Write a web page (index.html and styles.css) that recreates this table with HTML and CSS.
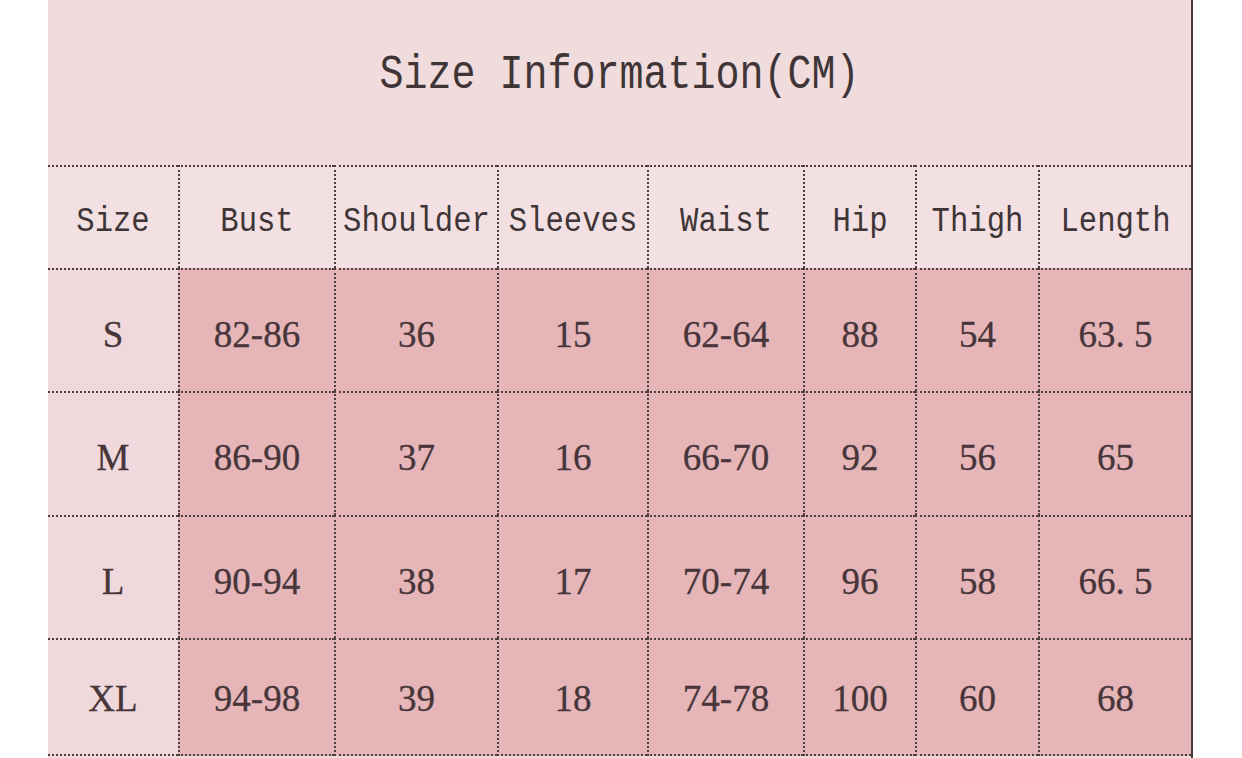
FILE: index.html
```html
<!DOCTYPE html>
<html lang="en">
<head>
<meta charset="utf-8">
<title>Size Information</title>
<link rel="stylesheet" href="styles.css">
</head>
<body>
<div class="sheet">
  <div class="title"><span class="title-text">Size Information(CM)</span></div>
  <div class="grid">
    <div class="cell head first"><span class="mono">Size</span></div>
    <div class="cell head"><span class="mono">Bust</span></div>
    <div class="cell head"><span class="mono">Shoulder</span></div>
    <div class="cell head"><span class="mono">Sleeves</span></div>
    <div class="cell head"><span class="mono">Waist</span></div>
    <div class="cell head"><span class="mono">Hip</span></div>
    <div class="cell head"><span class="mono">Thigh</span></div>
    <div class="cell head"><span class="mono">Length</span></div>

    <div class="cell size first"><span class="num">S</span></div>
    <div class="cell data"><span class="num">82-86</span></div>
    <div class="cell data"><span class="num">36</span></div>
    <div class="cell data"><span class="num">15</span></div>
    <div class="cell data"><span class="num">62-64</span></div>
    <div class="cell data"><span class="num">88</span></div>
    <div class="cell data"><span class="num">54</span></div>
    <div class="cell data"><span class="num">63. 5</span></div>

    <div class="cell size first"><span class="num">M</span></div>
    <div class="cell data"><span class="num">86-90</span></div>
    <div class="cell data"><span class="num">37</span></div>
    <div class="cell data"><span class="num">16</span></div>
    <div class="cell data"><span class="num">66-70</span></div>
    <div class="cell data"><span class="num">92</span></div>
    <div class="cell data"><span class="num">56</span></div>
    <div class="cell data"><span class="num">65</span></div>

    <div class="cell size first"><span class="num">L</span></div>
    <div class="cell data"><span class="num">90-94</span></div>
    <div class="cell data"><span class="num">38</span></div>
    <div class="cell data"><span class="num">17</span></div>
    <div class="cell data"><span class="num">70-74</span></div>
    <div class="cell data"><span class="num">96</span></div>
    <div class="cell data"><span class="num">58</span></div>
    <div class="cell data"><span class="num">66. 5</span></div>

    <div class="cell size first last"><span class="num">XL</span></div>
    <div class="cell data last"><span class="num">94-98</span></div>
    <div class="cell data last"><span class="num">39</span></div>
    <div class="cell data last"><span class="num">18</span></div>
    <div class="cell data last"><span class="num">74-78</span></div>
    <div class="cell data last"><span class="num">100</span></div>
    <div class="cell data last"><span class="num">60</span></div>
    <div class="cell data last"><span class="num">68</span></div>
  </div>
</div>
</body>
</html>
```

FILE: styles.css
```css
html, body {
  margin: 0;
  padding: 0;
  background: #ffffff;
  height: 758px;
  overflow: hidden;
}

.sheet {
  margin-left: 48px;
  width: 1143px;
  height: 758px;
  background: #f0dbdd;
  border-right: 2px solid #4a3a3c;
  display: flex;
  flex-direction: column;
}

.title {
  height: 165px;
  display: flex;
  justify-content: center;
  align-items: flex-start;
  padding-top: 52px;
  box-sizing: border-box;
}

.title-text {
  font-family: "Liberation Mono", "DejaVu Sans Mono", monospace;
  font-size: 40px;
  line-height: 48px;
  color: #3f3537;
  display: inline-block;
  transform: scaleY(1.2);
}

.grid {
  display: grid;
  grid-template-columns: 130px 156px 163px 150px 156px 112px 123px 153px;
  grid-template-rows: 103px 123px 124px 123px 118px;
  background: #e5b5b8;
}

.cell {
  box-sizing: border-box;
  border-top: 2px dotted #4e3d40;
  border-left: 2px dotted #4e3d40;
  display: flex;
  align-items: center;
  justify-content: center;
  padding-top: 8px;
}

.cell.first {
  border-left: none;
}

.cell.last {
  border-bottom: 2px dotted #4e3d40;
  padding-top: 4px;
}

.head {
  background: #f2e0e2;
}

.size {
  background: #efd9dc;
}

.data {
  background: #e5b5b8;
}

.mono {
  font-family: "Liberation Mono", "DejaVu Sans Mono", monospace;
  font-size: 30.6px;
  line-height: 36px;
  color: #3f3537;
  display: inline-block;
  transform: scaleY(1.14);
}

.num {
  font-family: "Liberation Serif", "Times New Roman", serif;
  font-size: 37px;
  line-height: 40px;
  color: #47353a;
  display: inline-block;
  -webkit-text-stroke: 0.3px #47353a;
}
```
